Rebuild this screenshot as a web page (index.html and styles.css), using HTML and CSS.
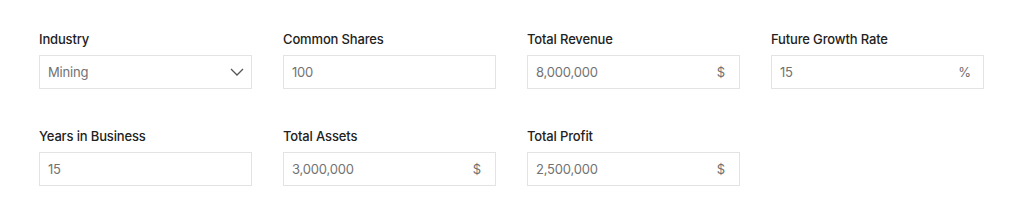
FILE: index.html
```html
<!DOCTYPE html>
<html>
<head>
<meta charset="utf-8">
<link rel="stylesheet" href="styles.css">
</head>
<body>
<div class="form">
  <div class="field">
    <div class="label">Industry</div>
    <div class="box">
      <span class="value">Mining</span>
      <svg class="chevron" width="14" height="8" viewBox="0 0 14 8"><path d="M1 1 L7 7 L13 1" fill="none" stroke="#555" stroke-width="1.3"/></svg>
    </div>
  </div>
  <div class="field">
    <div class="label">Common Shares</div>
    <div class="box"><span class="value">100</span></div>
  </div>
  <div class="field">
    <div class="label">Total Revenue</div>
    <div class="box"><span class="value">8,000,000</span><span class="suffix">$</span></div>
  </div>
  <div class="field">
    <div class="label">Future Growth Rate</div>
    <div class="box"><span class="value">15</span><span class="suffix pct">%</span></div>
  </div>
  <div class="field">
    <div class="label">Years in Business</div>
    <div class="box"><span class="value">15</span></div>
  </div>
  <div class="field">
    <div class="label">Total Assets</div>
    <div class="box"><span class="value">3,000,000</span><span class="suffix">$</span></div>
  </div>
  <div class="field">
    <div class="label">Total Profit</div>
    <div class="box"><span class="value">2,500,000</span><span class="suffix">$</span></div>
  </div>
</div>
</body>
</html>
```
FILE: styles.css
```css
html, body {
  margin: 0;
  padding: 0;
  background: #ffffff;
}
body {
  font-family: Inter, "Noto Sans", sans-serif;
  padding: 30px 0 0 39px;
}
.form {
  display: grid;
  grid-template-columns: repeat(4, 213px);
  column-gap: 31px;
  row-gap: 38px;
}
.field {
  display: flex;
  flex-direction: column;
}
.label {
  font-size: 13px;
  line-height: 18px;
  font-weight: 500;
  color: #222;
  margin-bottom: 7px;
  letter-spacing: -0.15px;
}
.box {
  height: 34px;
  box-sizing: border-box;
  border: 1px solid #e3e3e3;
  display: flex;
  align-items: center;
  justify-content: space-between;
  padding: 0 14px 0 8px;
}
.value {
  font-size: 13px;
  color: #727272;
  letter-spacing: -0.2px;
}
.suffix {
  font-size: 13px;
  color: #6f6f6f;
}
.suffix.pct {
  margin-right: -2px;
}
.chevron {
  margin-right: -7px;
}
```
